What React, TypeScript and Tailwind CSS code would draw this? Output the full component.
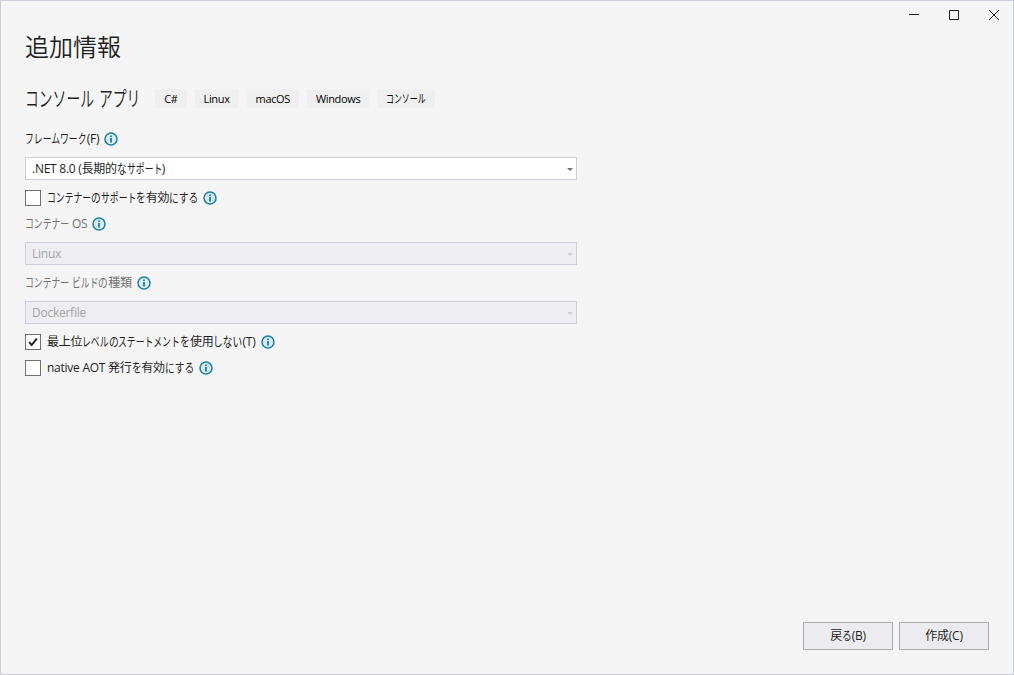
import React from 'react';
import clsx from 'clsx';

const TAGS = ['C#', 'Linux', 'macOS', 'Windows', 'コンソール'];

// Kana is set narrower than kanji, as in a proportional UI face
const KATAKANA = /^[ァ-ー]+$/;
const HIRAGANA = /^[ぁ-ん]+$/;

function JpText({ text, className, kana = 0.735 }: { text: string; className?: string; kana?: number }) {
  const runs = text.match(/[ァ-ー]+|[ぁ-ん]+|[^ぁ-んァ-ー]+/g) ?? [];

  return (
    <span className={clsx('whitespace-pre', className)}>
      {runs.map((run, i) => {
        const ratio = KATAKANA.test(run) ? kana : HIRAGANA.test(run) ? 0.81 : 1;
        if (ratio === 1) return <span key={i}>{run}</span>;
        return (
          <span key={i} className="inline-block" style={{ width: `${run.length * ratio}em` }}>
            <span className="inline-block origin-left tracking-normal" style={{ transform: `scale(${ratio}, 1.05)` }}>
              {run}
            </span>
          </span>
        );
      })}
    </span>
  );
}

function InfoIcon() {
  return (
    <svg width="14" height="14" viewBox="0 0 14 14" className="shrink-0">
      <circle cx="7" cy="7" r="6" fill="#d9eaf0" stroke="#1a80a2" strokeWidth="1.5" />
      <path d="M7 6v4.5M7 3.4v1.6" stroke="#1a80a2" strokeWidth="1.8" />
    </svg>
  );
}

function Label({ text, disabled, className }: { text: string; disabled?: boolean; className?: string }) {
  return (
    <div className={clsx('flex h-5 items-center gap-[5px]', className)}>
      <JpText text={text} className={disabled ? 'text-[#717171]' : undefined} />
      <InfoIcon />
    </div>
  );
}

function Select({ value, disabled }: { value: string; disabled?: boolean }) {
  return (
    <div
      className={clsx(
        'mt-2 flex h-[23px] w-[552px] items-center justify-between border border-[#cccedb] pr-[3px] pl-1.5',
        disabled ? 'bg-[#eeeef2] text-[#a2a4a5]' : 'bg-white',
      )}
    >
      <JpText text={value} />
      <svg
        width="6"
        height="3"
        viewBox="0 0 6 3"
        className={clsx('mt-px', disabled ? 'text-[#cccedb]' : 'text-[#717171]')}
      >
        <path d="M0 0h6L3 3z" fill="currentColor" />
      </svg>
    </div>
  );
}

function CheckRow({ text, checked }: { text: string; checked?: boolean }) {
  return (
    <div className="mt-2.5 flex h-4 items-center">
      <span className="mr-1.5 flex size-4 items-center justify-center border border-[#717171] bg-[#fefefe]">
        {checked && (
          <svg width="10" height="10" viewBox="0 0 10 10" fill="none">
            <path d="M1.2 5.2L3.7 8L8.8 1.5" stroke="#1e1e1e" strokeWidth="2" />
          </svg>
        )}
      </span>
      <JpText text={text} className="mr-[5px]" />
      <InfoIcon />
    </div>
  );
}

function DialogButton({ text }: { text: string }) {
  return (
    <button className="flex h-7 w-[90px] items-center justify-center border border-[#acacac] bg-[#ececf0]">
      <JpText text={text} />
    </button>
  );
}

export default function App() {
  return (
    <div className="flex h-[675px] w-[1014px] flex-col border border-[#cccedb] bg-[#f5f5f5] font-['Open_Sans','Noto_Sans_CJK_JP',sans-serif] text-[12px] leading-none tracking-[-0.25px] text-[#1e1e1e]">
      {/* Window controls */}
      <div className="-mr-px flex h-7 justify-end">
        <div className="flex w-10 items-center justify-center">
          <svg width="10" height="10" viewBox="0 0 10 10">
            <path d="M0 4.5h10" stroke="#1e1e1e" />
          </svg>
        </div>
        <div className="flex w-10 items-center justify-center">
          <svg width="10" height="10" viewBox="0 0 10 10">
            <path d="M.5.5h9v9h-9z" fill="none" stroke="#1e1e1e" />
          </svg>
        </div>
        <div className="flex w-10 items-center justify-center">
          <svg width="10" height="10" viewBox="0 0 10 10">
            <path d="M0 0l10 10M10 0L0 10" stroke="#1e1e1e" />
          </svg>
        </div>
      </div>

      <main className="flex flex-1 flex-col px-6 pb-6">
        <h1 className="flex h-9 items-center text-[24px] font-[350] tracking-normal">追加情報</h1>

        <div className="mt-[23px] flex h-5 items-center">
          <JpText
            text="コンソール アプリ"
            kana={0.69}
            className="mt-px mr-[15px] text-[20px] font-[350] tracking-[-0.4px]"
          />
          <div className="flex gap-2 text-[11px] tracking-[-0.35px] text-black">
            {TAGS.map((tag) => (
              <span key={tag} className="flex h-[19px] items-center rounded-[3px] bg-[#efefef] px-[9px]">
                <JpText text={tag} kana={0.72} />
              </span>
            ))}
          </div>
        </div>

        <Label text="フレームワーク(F)" className="mt-[21px]" />
        <Select value=".NET 8.0 (長期的なサポート)" />
        <CheckRow text="コンテナーのサポートを有効にする" />
        <Label text="コンテナー OS" disabled className="mt-2" />
        <Select value="Linux" disabled />
        <Label text="コンテナー ビルドの種類" disabled className="mt-2" />
        <Select value="Dockerfile" disabled />
        <CheckRow text="最上位レベルのステートメントを使用しない(T)" checked />
        <CheckRow text="native AOT 発行を有効にする" />

        <div className="mt-auto flex justify-end gap-1.5">
          <DialogButton text="戻る(B)" />
          <DialogButton text="作成(C)" />
        </div>
      </main>
    </div>
  );
}
